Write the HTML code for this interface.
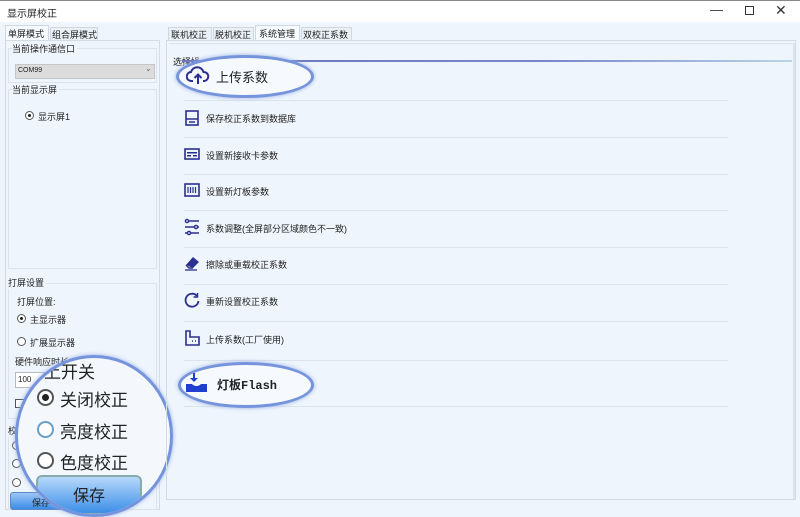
<!DOCTYPE html>
<html><head><meta charset="utf-8"><style>
*{box-sizing:border-box;margin:0;padding:0}
body{width:800px;height:516px;overflow:hidden;background:#eef5fc;font-family:"Liberation Sans","Noto Sans CJK SC",sans-serif;font-size:9px;color:#222;position:relative}
.a{position:absolute}
.t{position:absolute;white-space:nowrap}
.sep{position:absolute;left:184px;width:544px;height:1px;background:#dde3ea}
.it{position:absolute;left:206px;font-size:9px;color:#222;white-space:nowrap}
.ic{position:absolute;left:184px}
.rad{position:absolute;width:9px;height:9px;border:1px solid #555;border-radius:50%;background:#fff}
.rad.on::after{content:"";position:absolute;left:2px;top:2px;width:3px;height:3px;border-radius:50%;background:#222}
</style></head><body>
<div class="a" style="left:0;top:0;width:800px;height:22px;background:#fff"></div>
<div class="a" style="left:0;top:0;width:800px;height:1px;background:#888"></div>
<div class="t" style="left:7px;top:5px;font-size:10px">显示屏校正</div>
<div class="t" style="left:710px;top:2px;font-size:13px;color:#333">—</div>
<div class="a" style="left:745px;top:6px;width:9px;height:9px;border:1px solid #333"></div>
<div class="t" style="left:775px;top:2px;font-size:14px;color:#333">✕</div>

<!-- left tabs -->
<div class="a" style="left:5px;top:25px;width:44px;height:16px;background:#f7fbff;border:1px solid #cfd8e0;border-bottom:none"></div>
<div class="t" style="left:8px;top:27px">单屏模式</div>
<div class="a" style="left:50px;top:27px;width:48px;height:13px;border:1px solid #cfd8e0;border-bottom:none;background:#e9f0f6"></div>
<div class="t" style="left:52px;top:28px">组合屏模式</div>
<div class="a" style="left:5px;top:40px;width:155px;height:470px;border:1px solid #d3dbe3"></div>
<div class="a" style="left:8px;top:48px;width:149px;height:35px;border:1px solid #dde3ea"></div>
<div class="t" style="left:12px;top:42px;background:#eef5fc;padding-right:2px">当前操作通信口</div>
<div class="a" style="left:15px;top:64px;width:140px;height:15px;background:#dcdcdc;border:1px solid #c6c6c6"></div>
<div class="t" style="left:18px;top:67px;font-size:7px">COM99</div>
<div class="t" style="left:145px;top:64px;font-size:8px;color:#666">⌄</div>
<div class="a" style="left:8px;top:89px;width:149px;height:180px;border:1px solid #dde3ea"></div>
<div class="t" style="left:12px;top:83px;background:#eef5fc;padding-right:2px">当前显示屏</div>
<div class="rad on" style="left:25px;top:111px"></div>
<div class="t" style="left:38px;top:110px">显示屏1</div>

<div class="a" style="left:8px;top:283px;width:149px;height:136px;border:1px solid #dde3ea"></div>
<div class="t" style="left:8px;top:276px;background:#eef5fc;padding-right:2px">打屏设置</div>
<div class="t" style="left:17px;top:295px">打屏位置:</div>
<div class="rad on" style="left:17px;top:314px"></div>
<div class="t" style="left:30px;top:313px">主显示器</div>
<div class="rad" style="left:17px;top:337px"></div>
<div class="t" style="left:30px;top:336px">扩展显示器</div>
<div class="t" style="left:15px;top:355px">硬件响应时长</div>
<div class="a" style="left:15px;top:372px;width:40px;height:16px;background:#fff;border:1px solid #bbb"></div>
<div class="t" style="left:18px;top:375px;font-size:8px">100</div>
<div class="a" style="left:15px;top:399px;width:9px;height:9px;border:1px solid #555;background:#fff"></div>
<div class="a" style="left:8px;top:430px;width:149px;height:80px;border:1px solid #dde3ea"></div>
<div class="t" style="left:8px;top:424px;background:#eef5fc">校</div>
<div class="rad" style="left:12px;top:441px"></div>
<div class="rad" style="left:12px;top:459px"></div>
<div class="rad" style="left:12px;top:478px"></div>
<div class="a" style="left:10px;top:492px;width:70px;height:18px;border-radius:3px;border:1px solid #5c87c8;background:linear-gradient(#9cc6f6,#3b8ce8)"></div>
<div class="t" style="left:32px;top:496px">保存</div>

<!-- magnifier -->
<div class="a" style="left:15px;top:355px;width:158px;height:162px;border-radius:50%;border:3px solid #7694dc;background:#f4f8fd;overflow:hidden;box-shadow:0 0 4px #9bb0e6">
 <div class="t" style="left:26px;top:0px;font-size:17px">上开关</div>
 <div class="a" style="left:19px;top:31px;width:17px;height:17px;border:2px solid #555;border-radius:50%;background:#fff"><div class="a" style="left:3px;top:3px;width:7px;height:7px;border-radius:50%;background:#222"></div></div>
 <div class="t" style="left:42px;top:28px;font-size:17px">关闭校正</div>
 <div class="a" style="left:19px;top:63px;width:17px;height:17px;border:2px solid #6aa0c8;border-radius:50%;background:#fff"></div>
 <div class="t" style="left:42px;top:60px;font-size:17px">亮度校正</div>
 <div class="a" style="left:19px;top:94px;width:17px;height:17px;border:2px solid #555;border-radius:50%;background:#fff"></div>
 <div class="t" style="left:42px;top:91px;font-size:17px">色度校正</div>
 <div class="a" style="left:18px;top:117px;width:106px;height:40px;border-radius:6px;border:2px solid #8aa;background:linear-gradient(#b6d8fa,#3c8ee8)"></div>
 <div class="t" style="left:55px;top:124px;font-size:16px">保存</div>
</div>

<!-- right tabs -->
<div class="a" style="left:168px;top:27px;width:44px;height:13px;border:1px solid #cfd8e0;border-bottom:none;background:#e9f0f6"></div>
<div class="t" style="left:171px;top:28px">联机校正</div>
<div class="a" style="left:213px;top:27px;width:41px;height:13px;border:1px solid #cfd8e0;border-bottom:none;background:#e9f0f6"></div>
<div class="t" style="left:215px;top:28px">脱机校正</div>
<div class="a" style="left:255px;top:25px;width:45px;height:16px;border:1px solid #cfd8e0;border-bottom:none;background:#f7fbff"></div>
<div class="t" style="left:259px;top:27px">系统管理</div>
<div class="a" style="left:301px;top:27px;width:51px;height:13px;border:1px solid #cfd8e0;border-bottom:none;background:#e9f0f6"></div>
<div class="t" style="left:303px;top:28px">双校正系数</div>
<div class="a" style="left:166px;top:40px;width:630px;height:460px;border:1px solid #d3dbe3"></div>
<div class="a" style="left:169px;top:43px;width:626px;height:456px;border-top:1px solid #dde3ea;border-right:2px solid #dde3ea"></div>
<div class="t" style="left:173px;top:55px">选择操</div>
<div class="a" style="left:182px;top:60px;width:610px;height:2px;background:linear-gradient(90deg,#6b72c0,#7a86cc 60%,#b9d6e4)"></div>

<div class="sep" style="top:100px"></div>
<div class="sep" style="top:137px"></div>
<div class="sep" style="top:174px"></div>
<div class="sep" style="top:210px"></div>
<div class="sep" style="top:247px"></div>
<div class="sep" style="top:284px"></div>
<div class="sep" style="top:321px"></div>
<div class="sep" style="top:360px"></div>
<div class="sep" style="top:406px"></div>

<!-- items -->
<svg class="ic" style="top:110px" width="16" height="16" viewBox="0 0 16 16" fill="none" stroke="#2b2f8f" stroke-width="1.6"><rect x="2" y="1" width="12" height="14"/><path d="M2 9h12M5 12h6"/></svg>
<div class="it" style="top:112px">保存校正系数到数据库</div>
<svg class="ic" style="top:147px" width="16" height="14" viewBox="0 0 16 14"><rect x="1" y="2" width="14" height="10" fill="none" stroke="#2b2f8f" stroke-width="1.6"/><rect x="3" y="5" width="10" height="1.5" fill="#2b2f8f"/><rect x="3" y="8" width="4" height="1.5" fill="#2b2f8f"/><rect x="9" y="8" width="4" height="1.5" fill="#2b2f8f"/></svg>
<div class="it" style="top:149px">设置新接收卡参数</div>
<svg class="ic" style="top:183px" width="16" height="14" viewBox="0 0 16 14"><rect x="1" y="1" width="14" height="12" fill="none" stroke="#2b2f8f" stroke-width="1.6"/><path d="M4 4v6M6.5 4v6M9 4v6M11.5 4v6" stroke="#2b2f8f" stroke-width="1.2"/></svg>
<div class="it" style="top:185px">设置新灯板参数</div>
<svg class="ic" style="top:218px" width="16" height="18" viewBox="0 0 16 18" fill="none" stroke="#2b2f8f" stroke-width="1.4"><circle cx="3" cy="3" r="1.6"/><path d="M5 3h10M1 9h9M14 9h1M1 15h2M7 15h8"/><circle cx="12" cy="9" r="1.6"/><circle cx="5" cy="15" r="1.6"/></svg>
<div class="it" style="top:222px">系数调整(全屏部分区域颜色不一致)</div>
<svg class="ic" style="top:255px" width="18" height="16" viewBox="0 0 18 16"><path d="M2 10l7-8 6 5-6 6z" fill="#2b2f8f"/><path d="M2 10l3 3h4" fill="none" stroke="#2b2f8f" stroke-width="1.4"/><path d="M1 15h12" stroke="#2b2f8f" stroke-width="1.3"/></svg>
<div class="it" style="top:258px">擦除或重载校正系数</div>
<svg class="ic" style="top:292px" width="16" height="16" viewBox="0 0 16 16" fill="none" stroke="#2b2f8f" stroke-width="1.8"><path d="M13 4A6.5 6.5 0 1 0 14.5 9"/><path d="M13.5 1v4h-4" stroke-width="1.5"/></svg>
<div class="it" style="top:295px">重新设置校正系数</div>
<svg class="ic" style="top:330px" width="16" height="16" viewBox="0 0 16 16" fill="none" stroke="#2b2f8f" stroke-width="1.6"><path d="M2 1v14h13V7H6V1z"/><path d="M8 11h1M11 11h1"/></svg>
<div class="it" style="top:333px">上传系数(工厂使用)</div>

<!-- ellipse 1 -->
<div class="a" style="left:176px;top:55px;width:138px;height:43px;border-radius:50%;border:3px solid #7694dc;background:#f6f9fe;box-shadow:0 0 4px #9bb0e6"></div>
<svg class="a" style="left:186px;top:65px" width="24" height="20" viewBox="0 0 24 20" fill="none" stroke="#2b2f8f" stroke-width="2"><path d="M7 16H5.5A4.5 4.5 0 0 1 5 7a6.5 6.5 0 0 1 12.5 0A4.5 4.5 0 0 1 18 16h-1"/><path d="M12 19v-9M8.5 13l3.5-3.5 3.5 3.5"/></svg>
<div class="t" style="left:216px;top:67px;font-size:13px;color:#222">上传系数</div>

<!-- ellipse 2 -->
<div class="a" style="left:178px;top:362px;width:136px;height:46px;border-radius:50%;border:3px solid #7694dc;background:#f6f9fe;box-shadow:0 0 4px #9bb0e6"></div>
<svg class="a" style="left:185px;top:372px" width="24" height="22" viewBox="0 0 24 22"><path d="M9 1v7" stroke="#1f3fd0" stroke-width="2"/><path d="M5 6l4 4 4-4z" fill="#1f3fd0"/><path d="M1 12h6q2 2 4 2h1q2 0 4-2h6v8H1z" fill="#1f3fd0"/></svg>
<div class="t" style="left:217px;top:376px;font-size:12px;font-family:'Liberation Mono','Noto Sans CJK SC',monospace;font-weight:bold;color:#222">灯板Flash</div>
</body></html>
